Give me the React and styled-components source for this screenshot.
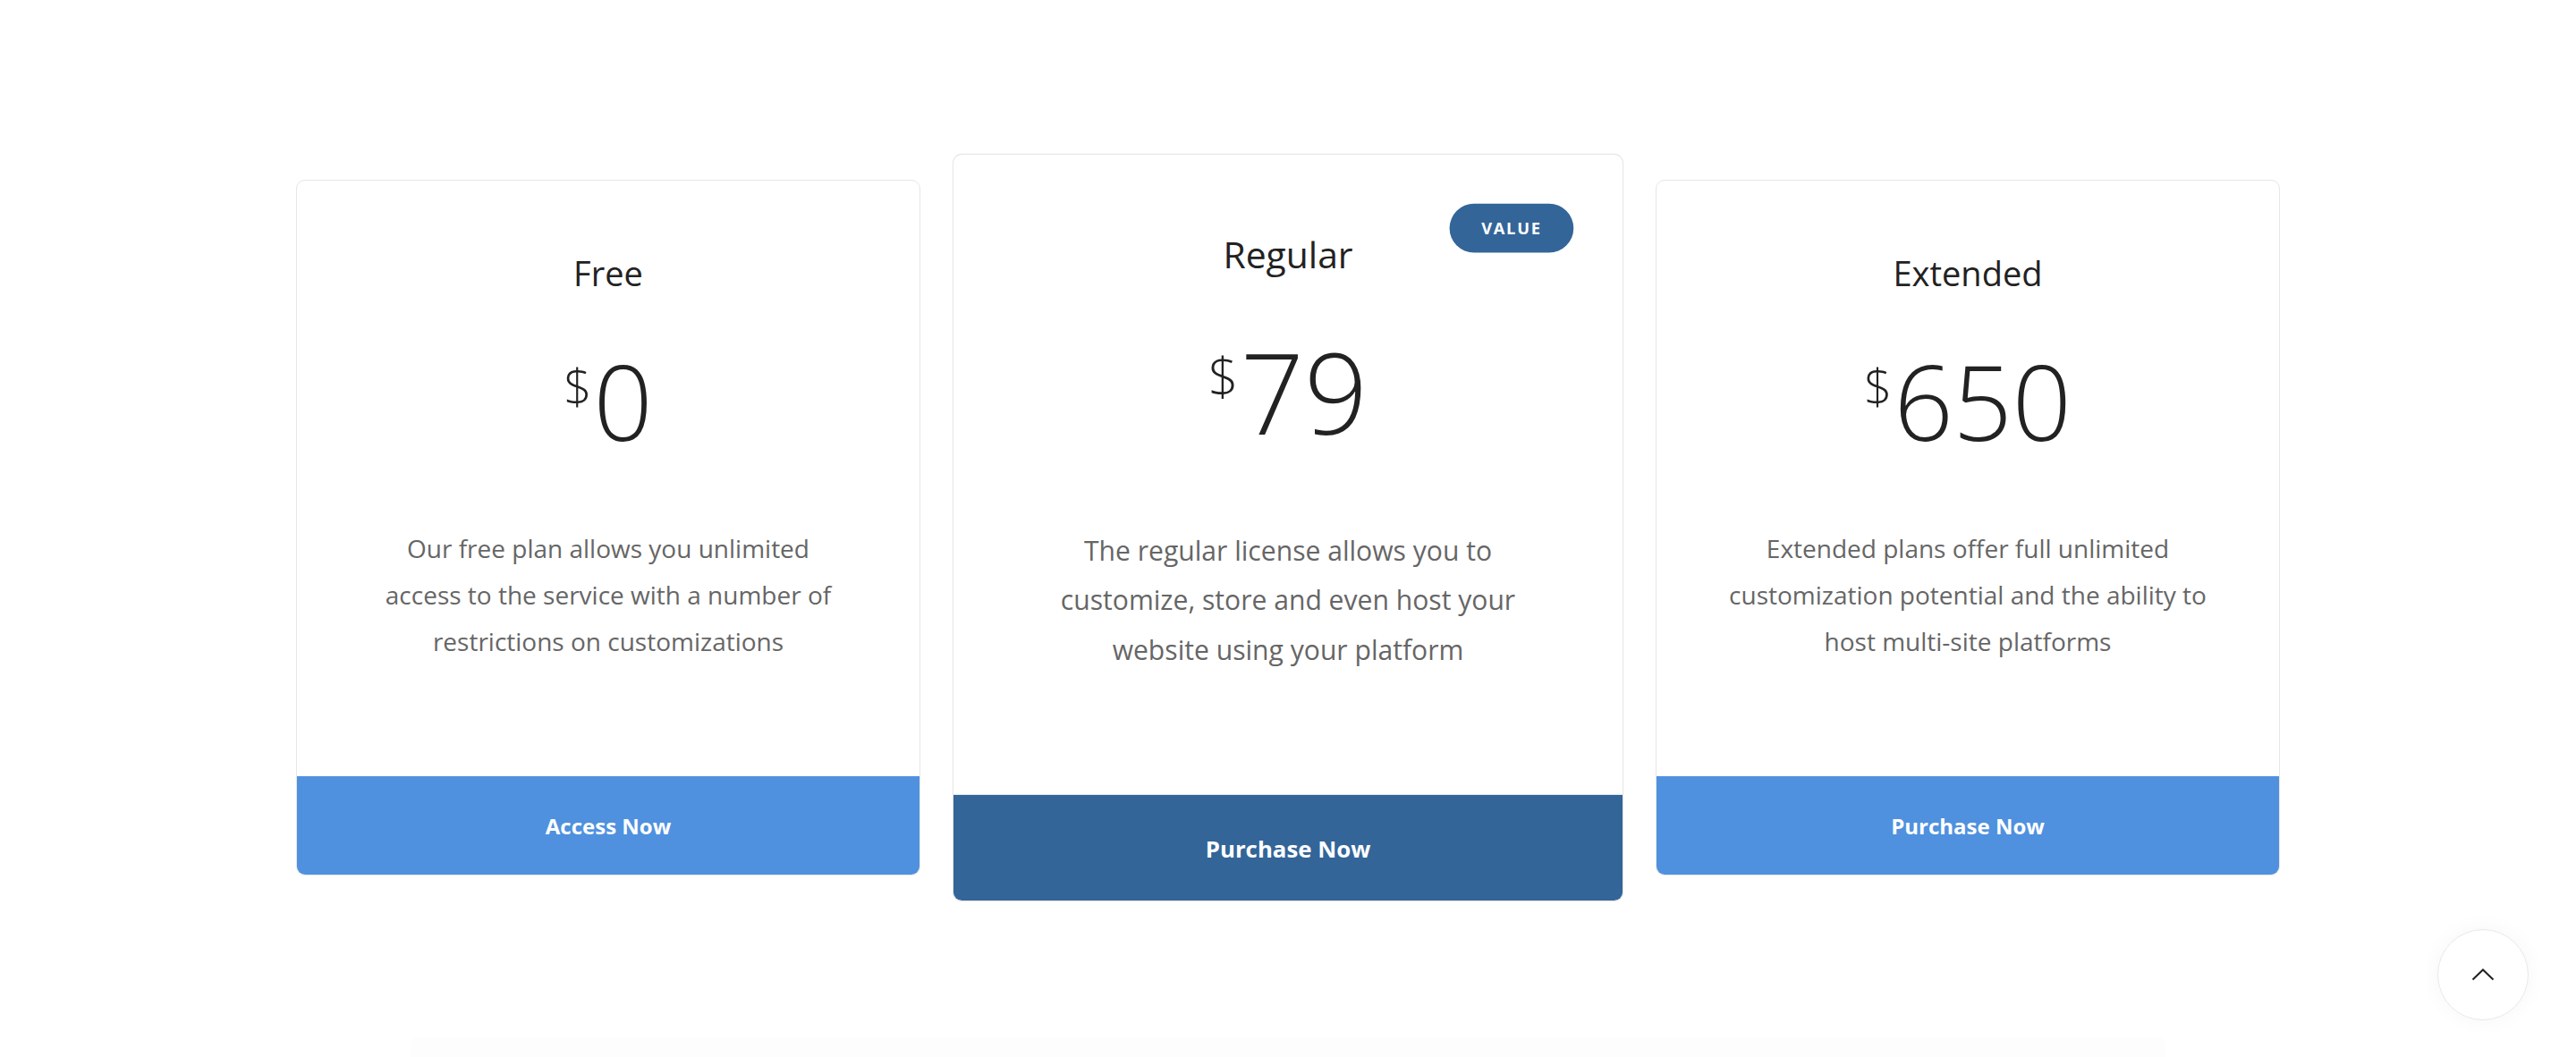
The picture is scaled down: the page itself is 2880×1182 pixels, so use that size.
import styled, { createGlobalStyle } from "styled-components";

const GlobalStyle = createGlobalStyle`
  html, body {
    margin: 0;
    padding: 0;
    background: #ffffff;
    font-family: "Open Sans", "Noto Sans", sans-serif;
  }
`;

const Page = styled.main`
  position: relative;
  min-height: 1182px;
  overflow: hidden;
  background: #ffffff;
`;

const Section = styled.section`
  display: flex;
  justify-content: center;
  padding-top: 201px;
`;

const Row = styled.div`
  display: flex;
  align-items: center;
  gap: 62px;
`;

const Card = styled.div`
  position: relative;
  width: 698px;
  box-sizing: border-box;
  display: flex;
  flex-direction: column;
  background: #ffffff;
  border: 1px solid #e6e6e6;
  border-radius: 10px;
  overflow: hidden;
  transform: ${(props) => (props.featured ? "scale(1.075)" : "none")};
`;

const Body = styled.div`
  display: flex;
  flex-direction: column;
  align-items: center;
  padding: 84px 0 125px;
`;

const Title = styled.h3`
  margin: 0;
  font-size: 38px;
  line-height: 1;
  font-weight: 400;
  color: #222222;
`;

const Price = styled.div`
  display: flex;
  align-items: flex-start;
  justify-content: center;
  margin-top: 66px;
  color: #222222;
  font-weight: 300;
`;

const Currency = styled.span`
  font-size: 55px;
  line-height: 1;
  margin-top: 13px;
  margin-right: 2px;
`;

const Amount = styled.span`
  font-size: 116px;
  line-height: 1;
`;

const Description = styled.p`
  margin: 81px 0 0;
  max-width: 540px;
  text-align: center;
  font-size: 28px;
  line-height: 52px;
  color: #666666;
`;

const Action = styled.button`
  height: 110px;
  border: none;
  background: ${(props) => (props.dark ? "#336599" : "#4f91de")};
  color: #ffffff;
  font-family: "Open Sans", sans-serif;
  font-size: 24px;
  font-weight: 700;
  cursor: pointer;
`;

const Badge = styled.span`
  position: absolute;
  top: 51px;
  right: 51px;
  width: 129px;
  height: 51px;
  display: flex;
  align-items: center;
  justify-content: center;
  border-radius: 26px;
  background: #336599;
  color: #ffffff;
  font-size: 17px;
  font-weight: 700;
  letter-spacing: 1.6px;
`;

const ScrollTop = styled.button`
  position: fixed;
  right: 53px;
  bottom: 41px;
  width: 102px;
  height: 102px;
  border-radius: 50%;
  border: 1px solid #e8e8e8;
  background: #ffffff;
  box-shadow: 0 0 24px rgba(0, 0, 0, 0.04);
  display: flex;
  align-items: center;
  justify-content: center;
  cursor: pointer;
`;

const NextSection = styled.div`
  position: absolute;
  left: 460px;
  right: 460px;
  top: 1161px;
  height: 60px;
  background: #fdfdfd;
  border-radius: 6px;
  box-shadow: 0 0 12px rgba(0, 0, 0, 0.012);
`;

const plans = [
  {
    name: "Free",
    price: "0",
    text: "Our free plan allows you unlimited access to the service with a number of restrictions on customizations",
    action: "Access Now",
  },
  {
    name: "Regular",
    price: "79",
    text: "The regular license allows you to customize, store and even host your website using your platform",
    action: "Purchase Now",
    featured: true,
  },
  {
    name: "Extended",
    price: "650",
    text: "Extended plans offer full unlimited customization potential and the ability to host multi-site platforms",
    action: "Purchase Now",
  },
];

const App = () => {
  return (
    <Page>
      <GlobalStyle />
      <Section>
        <Row>
          {plans.map((plan) => (
            <Card key={plan.name} featured={plan.featured}>
              {plan.featured && <Badge>VALUE</Badge>}
              <Body>
                <Title>{plan.name}</Title>
                <Price>
                  <Currency>$</Currency>
                  <Amount>{plan.price}</Amount>
                </Price>
                <Description>{plan.text}</Description>
              </Body>
              <Action dark={plan.featured}>{plan.action}</Action>
            </Card>
          ))}
        </Row>
      </Section>
      <NextSection />
      <ScrollTop aria-label="Back to top">
        <svg width="26" height="14" viewBox="0 0 26 14" fill="none">
          <path d="M1.5 12.5 L13 1.5 L24.5 12.5" stroke="#222" strokeWidth="2" />
        </svg>
      </ScrollTop>
    </Page>
  );
};

export default App;
